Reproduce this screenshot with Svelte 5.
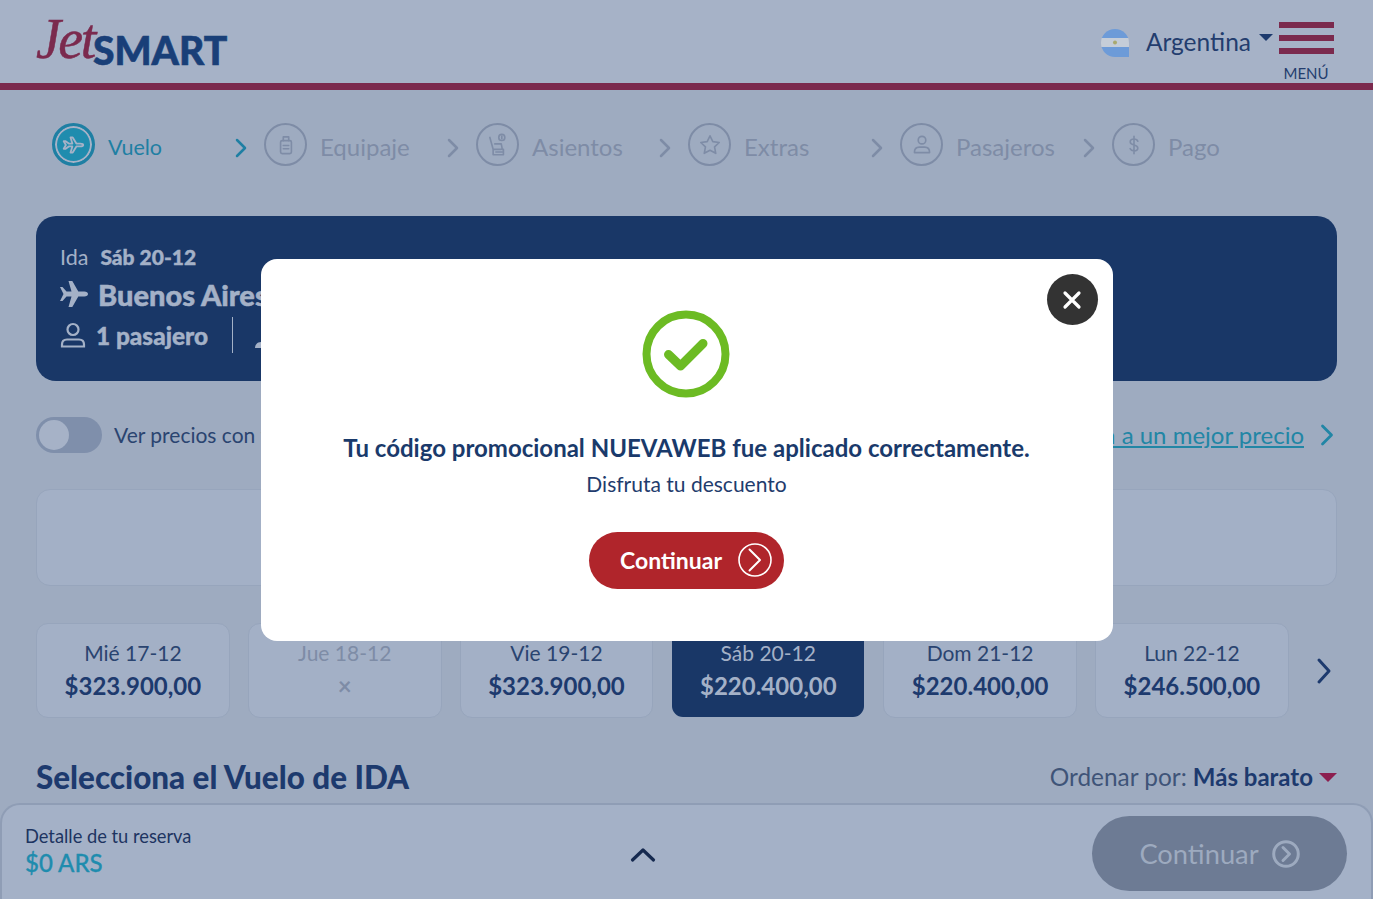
<script>
  const steps = [
    { label: 'Vuelo', icon: 'plane', active: true },
    { label: 'Equipaje', icon: 'bag' },
    { label: 'Asientos', icon: 'seat' },
    { label: 'Extras', icon: 'star' },
    { label: 'Pasajeros', icon: 'user' },
    { label: 'Pago', icon: 'dollar' }
  ];
  const dates = [
    { day: 'Mié 17-12', price: '$323.900,00' },
    { day: 'Jue 18-12', price: '×', off: true },
    { day: 'Vie 19-12', price: '$323.900,00' },
    { day: 'Sáb 20-12', price: '$220.400,00', selected: true },
    { day: 'Dom 21-12', price: '$220.400,00' },
    { day: 'Lun 22-12', price: '$246.500,00' }
  ];
</script>

<div class="page">
  <header class="header">
    <div class="logo"><span class="jet">Jet</span><span class="smart">SMART</span></div>
    <div class="header-right">
      <svg class="flag" width="28" height="28" viewBox="0 0 28 28">
        <defs><clipPath id="fc"><path d="M14 0a14 14 0 0 1 14 14v14H14A14 14 0 0 1 14 0z" /></clipPath></defs>
        <g clip-path="url(#fc)">
          <rect width="28" height="9" fill="#6d9bd8" />
          <rect y="9" width="28" height="9" fill="#c5cdd8" />
          <rect y="18" width="28" height="10" fill="#6d9bd8" />
          <circle cx="14" cy="13.500" r="2" fill="#a9a96f" />
        </g>
      </svg>
      <span class="country">Argentina</span>
      <span class="caret"></span>
      <div class="menu">
        <span class="bar"></span><span class="bar"></span><span class="bar"></span>
        <span class="menu-label">MENÚ</span>
      </div>
    </div>
  </header>

  <main class="content">
    <nav class="stepper">
      {#each steps as s, i}
        <div class="step" class:active={s.active}>
          <span class="circle">
            <svg width="26" height="26" viewBox="0 0 24 24" fill="none" stroke="currentColor" stroke-width="1.500" stroke-linecap="round" stroke-linejoin="round">
              {#if s.icon === 'plane'}
                <path d="M2.500 8.500l2 3.500-2 3.500h1.800l2.900-2.200h3.300l-1.700 5.700h2l3.400-5.700h3.600c1.500 0 2.700-.6 2.700-1.300s-1.200-1.300-2.700-1.300h-3.600L10.800 5H8.800l1.700 5.700H7.200L4.300 8.500z" stroke-width="1.700" />
              {:else if s.icon === 'bag'}
                <rect x="7" y="8" width="10" height="12" rx="1.500" /><path d="M9.500 8V4.500h5V8M9.500 12.500h5M9.500 15.500h5" />
              {:else if s.icon === 'seat'}
                <path d="M4.500 5l3 11h7.500M7.500 16v5h9.500v-5M9 11h6l1 5M10 18.500h7" /><circle cx="15.500" cy="5" r="2.800" /><path d="M15.500 3.800v2.400" />
              {:else if s.icon === 'star'}
                <path d="M12 3.500l2.600 5.400 5.900.8-4.300 4.100 1.100 5.900-5.300-2.800-5.300 2.800 1.100-5.900-4.300-4.100 5.900-.8z" />
              {:else if s.icon === 'user'}
                <circle cx="12" cy="7.500" r="3.500" /><path d="M5 19c0-3.500 2-5 4.500-5h5c2.500 0 4.500 1.500 4.500 5z" />
              {:else}
                <path d="M15.500 8.500c-.5-1.500-1.800-2-3.500-2-2 0-3.500 1-3.500 2.700 0 3.600 7 2 7 5.500 0 1.700-1.500 2.700-3.500 2.700-1.800 0-3-.7-3.600-2M12 4v16" />
              {/if}
            </svg>
          </span>
          <span class="step-label">{s.label}</span>
          {#if i < steps.length - 1}
            <svg class="step-chev" width="14" height="20" viewBox="0 0 14 20" fill="none" stroke="currentColor" stroke-width="2.500" stroke-linecap="round" stroke-linejoin="round"><path d="M3 2l8 8-8 8" /></svg>
          {/if}
        </div>
      {/each}
    </nav>

    <section class="flight">
      <div class="flight-date"><span>Ida</span><b>Sáb 20-12</b></div>
      <div class="flight-route">
        <svg width="28" height="26" viewBox="0 0 28 26" fill="#a4b1c7"><path d="M0 6l3.500 7L0 20h2.500l4-4.500h5L8.500 26h3.800l6-10.500h6c2.300 0 3.700-1.200 3.700-2.500s-1.400-2.500-3.700-2.500h-6L12.300 0H8.500l3 10.500h-5l-4-4.500z" /></svg>
        <span>Buenos Aires</span>
      </div>
      <div class="flight-meta">
        <svg width="26" height="26" viewBox="0 0 26 26" fill="none" stroke="#a4b1c7" stroke-width="2.200"><circle cx="13" cy="7.500" r="5.500" /><path d="M2 24.500v-2c0-3 2-5 5-5h12c3 0 5 2 5 5v2z" /></svg>
        <span>1 pasajero</span>
        <span class="divider"></span>
        <svg class="meta-2" width="12" height="12" viewBox="0 0 12 12" fill="#a4b1c7"><path d="M0 11c0-3 2-6 6-6v6z" /></svg>
      </div>
    </section>

    <div class="options">
      <div class="toggle-wrap">
        <span class="toggle"><span class="knob"></span></span>
        <span class="toggle-label">Ver precios con t</span>
      </div>
      <div class="best">
        <a class="best-link" href="#top">Vuela a un mejor precio</a>
        <svg width="14" height="24" viewBox="0 0 14 24" fill="none" stroke="#2286a5" stroke-width="2.800" stroke-linecap="round" stroke-linejoin="round"><path d="M2.500 3l9 9-9 9" /></svg>
      </div>
    </div>

    <div class="panel"></div>

    <div class="dates">
      {#each dates as d}
        <div class="date" class:selected={d.selected} class:off={d.off}>
          <span class="date-day">{d.day}</span>
          <span class="date-price">{d.price}</span>
        </div>
      {/each}
      <svg class="dates-next" width="16" height="28" viewBox="0 0 16 28" fill="none" stroke="#1d3a6e" stroke-width="3" stroke-linecap="round" stroke-linejoin="round"><path d="M3 3l10 11L3 25" /></svg>
    </div>

    <div class="title-row">
      <h1>Selecciona el Vuelo de IDA</h1>
      <div class="sort">
        <span class="sort-label">Ordenar por:</span>
        <b>Más barato</b>
        <span class="sort-caret"></span>
      </div>
    </div>
  </main>

  <footer class="summary">
    <div class="summary-text">
      <span class="summary-title">Detalle de tu reserva</span>
      <span class="summary-price">$0 ARS</span>
    </div>
    <svg class="summary-up" width="26" height="16" viewBox="0 0 26 16" fill="none" stroke="#15294f" stroke-width="3.200" stroke-linecap="round" stroke-linejoin="round"><path d="M2.500 13L13 3l10.500 10" /></svg>
    <button class="summary-btn">
      Continuar
      <svg width="28" height="28" viewBox="0 0 28 28" fill="none" stroke="#9daabf" stroke-width="3" stroke-linecap="round" stroke-linejoin="round"><circle cx="14" cy="14" r="12.300" /><path d="M11 7.500l6.500 6.500-6.500 6.500" /></svg>
    </button>
  </footer>

  <div class="overlay">
    <div class="modal" role="dialog">
      <button class="close" aria-label="Cerrar">
        <svg width="20" height="20" viewBox="0 0 20 20" fill="none" stroke="#fff" stroke-width="3.200" stroke-linecap="round"><path d="M3 3l14 14M17 3L3 17" /></svg>
      </button>
      <svg class="check" width="88" height="88" viewBox="0 0 88 88" fill="none">
        <circle cx="44" cy="44" r="39.500" stroke="#6cbb23" stroke-width="8" />
        <path d="M26.500 44.500L38.500 56 61 33.500" stroke="#6cbb23" stroke-width="9" stroke-linecap="round" stroke-linejoin="round" />
      </svg>
      <h2>Tu código promocional NUEVAWEB fue aplicado correctamente.</h2>
      <p>Disfruta tu descuento</p>
      <button class="continue">
        Continuar
        <svg width="34" height="34" viewBox="0 0 34 34" fill="none" stroke="#fff" stroke-width="1.600" stroke-linecap="round" stroke-linejoin="round"><circle cx="17" cy="17" r="16" /><path d="M11.500 6.500L22 17 11.500 27.500" stroke-width="2" /></svg>
      </button>
    </div>
  </div>
</div>

<style>
  :global(body) {
    margin: 0;
    background: #9daabf;
    font-family: Lato, "Liberation Sans", sans-serif;
  }
  .page {
    height: 899px;
    overflow: hidden;
    background: #9eabc0;
    color: #1d3a6e;
  }
  .header {
    height: 83px;
    background: #a6b2c7;
    border-bottom: 7px solid #7b2a4e;
    display: flex;
    justify-content: space-between;
    padding: 0 39px 0 36px;
  }
  .logo {
    display: flex;
    align-items: flex-end;
    height: 70px;
  }
  .jet {
    font-family: "Liberation Serif", serif;
    font-style: italic;
    font-size: 56px;
    line-height: 56px;
    color: #7b2a4e;
    width: 57px;
    letter-spacing: -2.500px;
    margin-bottom: 3px;
    -webkit-text-stroke: 0.5px #7b2a4e;
  }
  .smart {
    font-weight: 900;
    font-size: 39px;
    line-height: 40px;
    color: #193f78;
    -webkit-text-stroke: 0.6px #193f78;
  }
  .header-right {
    display: flex;
    align-items: flex-start;
  }
  .flag {
    margin-top: 29px;
    margin-right: 17px;
  }
  .country {
    font-size: 24.500px;
    line-height: 32px;
    margin-top: 26px;
    color: #233d6e;
  }
  .caret {
    width: 0;
    height: 0;
    border-left: 7px solid transparent;
    border-right: 7px solid transparent;
    border-top: 7px solid #1d3a6e;
    margin: 34px 5px 0 8px;
  }
  .menu {
    width: 56px;
    padding-top: 22px;
    display: flex;
    flex-direction: column;
    align-items: center;
    gap: 7px;
  }
  .bar {
    width: 55px;
    height: 6px;
    background: #7b2a4e;
  }
  .menu-label {
    font-size: 15px;
    line-height: 20px;
    margin-top: 2px;
    color: #233d6e;
  }
  .content {
    padding: 0 36px;
  }
  .stepper {
    display: flex;
    padding: 33px 0 0 16px;
    height: 93px;
    box-sizing: border-box;
    margin-bottom: 33px;
  }
  .step {
    width: 212px;
    flex: none;
    display: flex;
    align-items: center;
    height: 43px;
    color: #7e8ca6;
    padding-right: 16px;
    box-sizing: border-box;
  }
  .circle {
    width: 43px;
    height: 43px;
    flex: none;
    box-sizing: border-box;
    border: 2px solid #7e8ca6;
    border-radius: 50%;
    display: flex;
    align-items: center;
    justify-content: center;
    margin-right: 13px;
  }
  .step-label {
    flex: 1;
    font-size: 24px;
    line-height: 30px;
    padding-top: 5px;
  }
  .step-chev { margin-top: 7px; }
  .step.active { color: #1f7fa3; }
  .step.active .step-label { font-size: 21.500px; }
  .step.active .circle {
    background: #1f8cae;
    color: #a6b2c7;
    box-shadow: inset 0 0 0 2px #a6b2c7;
    border: 3px solid #1f7fa3;
  }
  .flight {
    height: 165px;
    box-sizing: border-box;
    background: #193767;
    border-radius: 20px;
    padding: 28px 24px;
    color: #a4b1c7;
  }
  .flight-date {
    font-size: 21.500px;
    line-height: 26px;
    display: flex;
    gap: 12px;
  }
  .flight-date b {
    font-size: 21px;
    font-weight: 900;
    -webkit-text-stroke: 0.4px #a4b1c7;
  }
  .flight-route {
    display: flex;
    align-items: center;
    gap: 10px;
    font-size: 29px;
    font-weight: 900;
    height: 36px;
    margin-top: 6px;
    -webkit-text-stroke: 0.5px #a4b1c7;
  }
  .flight-meta {
    display: flex;
    align-items: center;
    gap: 10px;
    font-size: 24.400px;
    font-weight: 900;
    height: 36px;
    margin-top: 5px;
    -webkit-text-stroke: 0.4px #a4b1c7;
  }
  .divider {
    width: 1px;
    height: 36px;
    background: #a4b1c7;
    margin-left: 14px;
  }
  .meta-2 { margin: 16px 0 0 12px; }
  .options {
    height: 36px;
    margin-top: 36px;
    display: flex;
    justify-content: space-between;
    align-items: center;
  }
  .toggle-wrap {
    display: flex;
    align-items: center;
    gap: 12px;
  }
  .toggle {
    width: 66px;
    height: 36px;
    box-sizing: border-box;
    border-radius: 18px;
    background: #7f8fab;
    padding: 3px;
    display: block;
  }
  .knob {
    display: block;
    width: 30px;
    height: 30px;
    border-radius: 50%;
    background: #a6b2c7;
  }
  .toggle-label {
    font-size: 21px;
    color: #2a4470;
    padding-bottom: 2px;
  }
  .best {
    display: flex;
    align-items: center;
    gap: 16px;
    padding-right: 3px;
  }
  .best-link {
    font-size: 24px;
    color: #2286a5;
    padding-bottom: 2px;
  }
  .panel {
    height: 97px;
    box-sizing: border-box;
    margin-top: 36px;
    background: #a3b0c6;
    border: 1px solid #97a5bc;
    border-radius: 14px;
  }
  .dates {
    display: flex;
    align-items: center;
    gap: 18px;
    margin-top: 37px;
    height: 95px;
  }
  .date {
    width: 193.800px;
    height: 95px;
    flex: none;
    box-sizing: border-box;
    background: #a3b0c6;
    border: 1px solid #97a5bc;
    border-radius: 12px;
    display: flex;
    flex-direction: column;
    align-items: center;
    padding-top: 15px;
    color: #2a4470;
  }
  .date-day {
    font-size: 21px;
    line-height: 27px;
  }
  .date-price {
    font-size: 24px;
    font-weight: 700;
    line-height: 40px;
    color: #1d3a6e;
  }
  .date.off { color: #7e8ca6; }
  .date.off .date-price { color: #7e8ca6; }
  .date.selected {
    background: #193767;
    background-clip: padding-box;
    border-color: transparent;
    color: #a4b1c7;
  }
  .date.selected .date-price { color: #a4b1c7; }
  .dates-next { margin-left: 9px; }
  .title-row {
    display: flex;
    justify-content: space-between;
    align-items: center;
    margin-top: 39px;
    height: 40px;
  }
  h1 {
    margin: 0;
    font-size: 31.400px;
    font-weight: 900;
    color: #1d3a6e;
  }
  .sort {
    display: flex;
    align-items: center;
    gap: 6px;
    font-size: 24px;
    padding-bottom: 2px;
  }
  .sort-label { color: #3f5478; font-size: 24.400px; }
  .sort b { font-weight: 700; color: #1d3a6e; }
  .sort-caret {
    width: 0;
    height: 0;
    border-left: 9px solid transparent;
    border-right: 9px solid transparent;
    border-top: 9px solid #8c1f4f;
    margin-top: 2px;
  }
  .summary {
    position: fixed;
    left: 0;
    right: 0;
    bottom: 0;
    height: 96px;
    box-sizing: border-box;
    background: #a4b1c7;
    border: 2px solid #8f9db5;
    border-bottom: 0;
    border-radius: 20px 20px 0 0;
    display: flex;
    align-items: center;
    padding: 0 24px 0 23px;
  }
  .summary-text {
    display: flex;
    flex-direction: column;
    width: 605px;
    flex: none;
    padding-bottom: 2px;
  }
  .summary-title {
    font-size: 18.300px;
    line-height: 24px;
    color: #1d3461;
  }
  .summary-price {
    font-size: 24px;
    font-weight: 500;
    line-height: 30px;
    color: #1f8cae;
    -webkit-text-stroke: 0.3px #1f8cae;
  }
  .summary-up { margin-top: 6px; }
  .summary-btn {
    margin-left: auto;
    width: 255px;
    height: 75px;
    border: 0;
    border-radius: 38px;
    background: #6d7b94;
    color: #9daabf;
    font: 400 27.300px Lato, sans-serif;
    display: flex;
    align-items: center;
    justify-content: center;
    gap: 13px;
    margin-top: 3px;
  }
  .overlay {
    position: fixed;
    inset: 0;
    display: flex;
    align-items: center;
    justify-content: center;
  }
  .modal {
    position: relative;
    width: 852px;
    height: 382px;
    box-sizing: border-box;
    background: #fff;
    border-radius: 16px;
    display: flex;
    flex-direction: column;
    align-items: center;
    padding-top: 51px;
  }
  .close {
    position: absolute;
    top: 15px;
    right: 15px;
    width: 51px;
    height: 51px;
    border: 0;
    padding: 2px 0 0;
    border-radius: 50%;
    background: #333333;
    display: flex;
    align-items: center;
    justify-content: center;
  }
  .check { margin-right: 1px; }
  h2 {
    margin: 33px 0 0;
    font-size: 24px;
    line-height: 34px;
    font-weight: 700;
    color: #1a3a6b;
  }
  p {
    margin: 3px 0 0;
    font-size: 21px;
    line-height: 32px;
    color: #1f3c6d;
  }
  .continue {
    margin-top: 32px;
    width: 195px;
    height: 57px;
    border: 0;
    border-radius: 29px;
    background: #b0252b;
    color: #fff;
    font: 700 23px Lato, sans-serif;
    display: flex;
    align-items: center;
    justify-content: center;
    gap: 16px;
    padding: 0 0 0 19px;
  }
</style>
